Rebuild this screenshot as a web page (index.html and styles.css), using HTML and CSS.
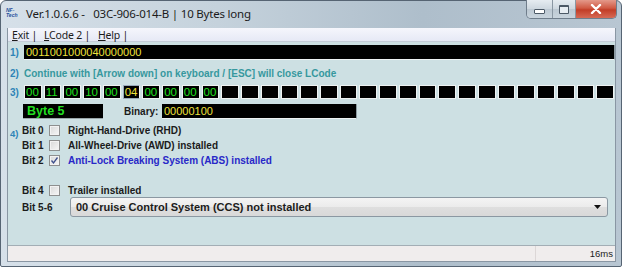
FILE: index.html
```html
<!DOCTYPE html>
<html lang="en">
<head>
    <meta charset="UTF-8">
    <title>LCode</title>
    <link rel="stylesheet" href="styles.css">
</head>
<body>

    <div class="window">
        <div class="titlebar">
            <div class="logo"><span>NF-</span><span>Tech</span></div>
            <span class="title">Ver.1.0.6.6 -&nbsp;&nbsp; 03C-906-014-B | 10 Bytes long</span>
            <div class="caption">
                <div class="cap cap-min"><span class="min-bar"></span></div>
                <div class="cap cap-max"><span class="max-box"></span></div>
                <div class="cap cap-close">
                    <svg width="14" height="10" viewBox="0 0 14 10">
                        <path d="M3 1 L11 9 M11 1 L3 9" stroke="#fff" stroke-width="2.4" stroke-linecap="round"/>
                    </svg>
                </div>
            </div>
        </div>

        <div class="client">
            <div class="menubar">
                <span class="menu-item m-exit"><u>E</u>xit |</span>
                <span class="menu-item m-lcode"><u>L</u>Code 2 |</span>
                <span class="menu-item m-help"><u>H</u>elp |</span>
            </div>

            <div class="content">
                <div class="row r1">
                    <span class="num">1)</span>
                    <div class="field code">0011001000040000000</div>
                </div>

                <div class="row r2">
                    <span class="num">2)</span>
                    <span class="hint">Continue with [Arrow down] on keyboard / [ESC] will close LCode</span>
                </div>

                <div class="row r3">
                    <span class="num">3)</span>
                    <div class="cells" id="cells"></div>
                </div>

                <div class="row r-byte">
                    <div class="bytebox">Byte 5</div>
                    <span class="bin-label">Binary:</span>
                    <div class="field bin">00000100</div>
                </div>

                <div class="bits">
                    <div class="bit-row">
                        <span class="slot"><span class="num4">4)</span></span>
                        <span class="bit-name">Bit 0</span>
                        <span class="check"></span>
                        <span class="bit-label">Right-Hand-Drive (RHD)</span>
                    </div>
                    <div class="bit-row">
                        <span class="slot"></span>
                        <span class="bit-name">Bit 1</span>
                        <span class="check"></span>
                        <span class="bit-label">All-Wheel-Drive (AWD) installed</span>
                    </div>
                    <div class="bit-row">
                        <span class="slot"></span>
                        <span class="bit-name">Bit 2</span>
                        <span class="check checked">
                            <svg width="9" height="9" viewBox="0 0 9 9">
                                <path d="M1.5 4.5 L3.5 7 L7.5 1.5" fill="none" stroke="#3d4f8c" stroke-width="1.3"/>
                            </svg>
                        </span>
                        <span class="bit-label on">Anti-Lock Breaking System (ABS) installed</span>
                    </div>
                    <div class="bit-row empty"></div>
                    <div class="bit-row">
                        <span class="slot"></span>
                        <span class="bit-name">Bit 4</span>
                        <span class="check"></span>
                        <span class="bit-label">Trailer installed</span>
                    </div>
                    <div class="bit-row combo-row">
                        <span class="slot"></span>
                        <span class="bit-name wide">Bit 5-6</span>
                        <div class="combo">
                            <span>00 Cruise Control System (CCS) not installed</span>
                            <svg width="7" height="4" viewBox="0 0 7 4"><path d="M0 0 H7 L3.5 4 Z" fill="#111"/></svg>
                        </div>
                    </div>
                </div>
            </div>

            <div class="statusbar">
                <div class="status-main"></div>
                <div class="status-time">16ms</div>
            </div>
        </div>
    </div>

    <script>
        // Byte cells: 10 bytes filled, the rest empty
        const bytes = ['00', '11', '00', '10', '00', '04', '00', '00', '00', '00'];
        const cells = document.getElementById('cells');
        for (let i = 0; i < 30; i++) {
            const cell = document.createElement('div');
            cell.className = 'cell';
            if (i < bytes.length) cell.textContent = bytes[i];
            if (i === 5) cell.classList.add('cell-active');
            cells.appendChild(cell);
        }
    </script>

</body>
</html>
```

FILE: styles.css
```css
body { margin: 0; background: #fff; font-family: "Liberation Sans", Arial, sans-serif; }

.window { width: 622px; height: 267px; box-sizing: border-box; border: 1px solid #566473; border-radius: 6px 6px 2px 2px; padding: 0 5px 4px 6px; display: flex; flex-direction: column; background: linear-gradient(90deg, #d6e0e9 0%, #c5d2dc 35%, #aebecb 68%, #b8c6d2 100%); }

.titlebar { height: 27px; display: flex; align-items: flex-start; }
.logo { width: 15px; margin: 7px 0 0 -1px; display: flex; flex-direction: column; font-size: 5px; line-height: 5px; font-weight: bold; font-style: italic; color: #1f4f9c; }
.title { margin: 5px 0 0 5px; font-family: "Noto Sans", sans-serif; font-size: 11.5px; color: #1b1b1b; letter-spacing: -0.2px; }

.caption { margin-left: auto; margin-right: -1px; margin-top: -1px; display: flex; height: 18px; border: 1px solid #6f7d8b; border-top: none; border-radius: 0 0 5px 5px; overflow: hidden; }
.cap { display: flex; align-items: center; justify-content: center; height: 100%; background: linear-gradient(#e6ecf1, #cdd7df 50%, #bcc8d2 51%, #c9d4dd); }
.cap-min { width: 25px; border-right: 1px solid #8a97a3; }
.cap-max { width: 22px; border-right: 1px solid #8a97a3; }
.cap-close { width: 40px; background: linear-gradient(#e4998a, #d05a44 45%, #c23d27 55%, #d66a55); }
.min-bar { width: 9px; height: 3px; margin-top: 5px; border: 1px solid #4c5966; border-radius: 1px; background: #fff; }
.max-box { width: 8px; height: 6px; border: 1px solid #4c5966; border-top-width: 2px; border-radius: 1px; background: #e7edf2; }

.client { flex: 1; display: flex; flex-direction: column; border: 1px solid #8996a3; border-top: none; }

.menubar { height: 13px; padding-left: 4px; display: flex; align-items: center; border-bottom: 1px solid #c5cdd8; background: linear-gradient(#f5f6fc, #e6e9f5); font-family: "Noto Sans", sans-serif; font-size: 10.5px; letter-spacing: -0.2px; color: #1b1b1b; }
.menu-item { white-space: nowrap; }
.m-exit { width: 32px; }
.m-lcode { width: 54px; }
.menu-item u { text-decoration-thickness: 1px; }

.content { flex: 1; padding: 3px 0 0 2px; background: #cde0e3; }
.row { display: flex; align-items: center; }
.num { width: 14px; font-size: 10px; font-weight: bold; color: #2f84b7; }

.field { box-sizing: border-box; height: 15px; padding-left: 2px; background: #000; border-right: 1px solid #8c9aa0; border-bottom: 1px solid #eef3f4; font-size: 11px; line-height: 14px; color: #efe23c; }
.code { flex: 1; }

.r2 { margin-top: 7px; height: 13px; }
.hint { font-size: 10px; font-weight: bold; color: #36989e; }

.r3 { margin-top: 5px; height: 14px; }
.cells { flex: 1; display: grid; grid-template-columns: repeat(30, 1fr); gap: 2px; margin-right: 1px; }
.cell { height: 14px; box-sizing: border-box; border: 1px solid #eef2f2; background: #000; font-size: 11.5px; line-height: 12px; padding-left: 1px; color: #1fe01f; }
.cell-active { border-color: #9aaabb; border-right-color: #f6f6f6; color: #efe23c; }

.r-byte { margin-top: 5px; height: 15px; }
.bytebox { box-sizing: border-box; width: 80px; height: 15px; margin-left: 13px; padding-left: 4px; background: #000; border-bottom: 1px solid #9aa6aa; font-size: 12.5px; font-weight: bold; line-height: 15px; color: #22dd22; }
.bin-label { margin-left: 21px; width: 38px; font-size: 10px; font-weight: bold; color: #1b1b1b; }
.bin { width: 195px; }

.bits { margin-top: 4px; }
.bit-row { height: 15px; display: flex; align-items: center; }
.bit-row.empty { height: 15px; }
.slot { width: 12px; align-self: flex-start; }
.num4 { font-size: 9.5px; font-weight: bold; color: #2f84b7; }
.bit-name { width: 27px; font-size: 10px; font-weight: bold; color: #1b1b1b; }
.bit-name.wide { width: 48px; }
.check { box-sizing: border-box; width: 11px; height: 11px; display: flex; align-items: center; justify-content: center; border: 1px solid #8e8f8f; background: linear-gradient(135deg, #d8d8d8, #f7f7f7); box-shadow: inset 0 0 0 1px #f2f2f2; }
.bit-label { margin-left: 8px; font-size: 10px; font-weight: bold; color: #1b1b1b; }
.bit-label.on { color: #2828c8; }

.combo-row { height: 20px; margin-top: -1px; }
.combo { box-sizing: border-box; flex: 1; height: 20px; margin-right: 7px; padding: 0 6px 0 5px; display: flex; align-items: center; justify-content: space-between; border: 1px solid #8b98a2; border-radius: 3px; background: linear-gradient(#f4f4f4, #ebebeb 50%, #dedede 51%, #d9d9d9); font-size: 11px; font-weight: bold; color: #1b1b1b; }

.statusbar { height: 15px; display: flex; border-top: 1px solid #a3aeb5; background: #f0eded; }
.status-main { flex: 1; border-right: 1px solid #dcd7d7; }
.status-time { width: 77px; padding-right: 2px; text-align: right; font-size: 9.5px; line-height: 15px; color: #1b1b1b; }
```
